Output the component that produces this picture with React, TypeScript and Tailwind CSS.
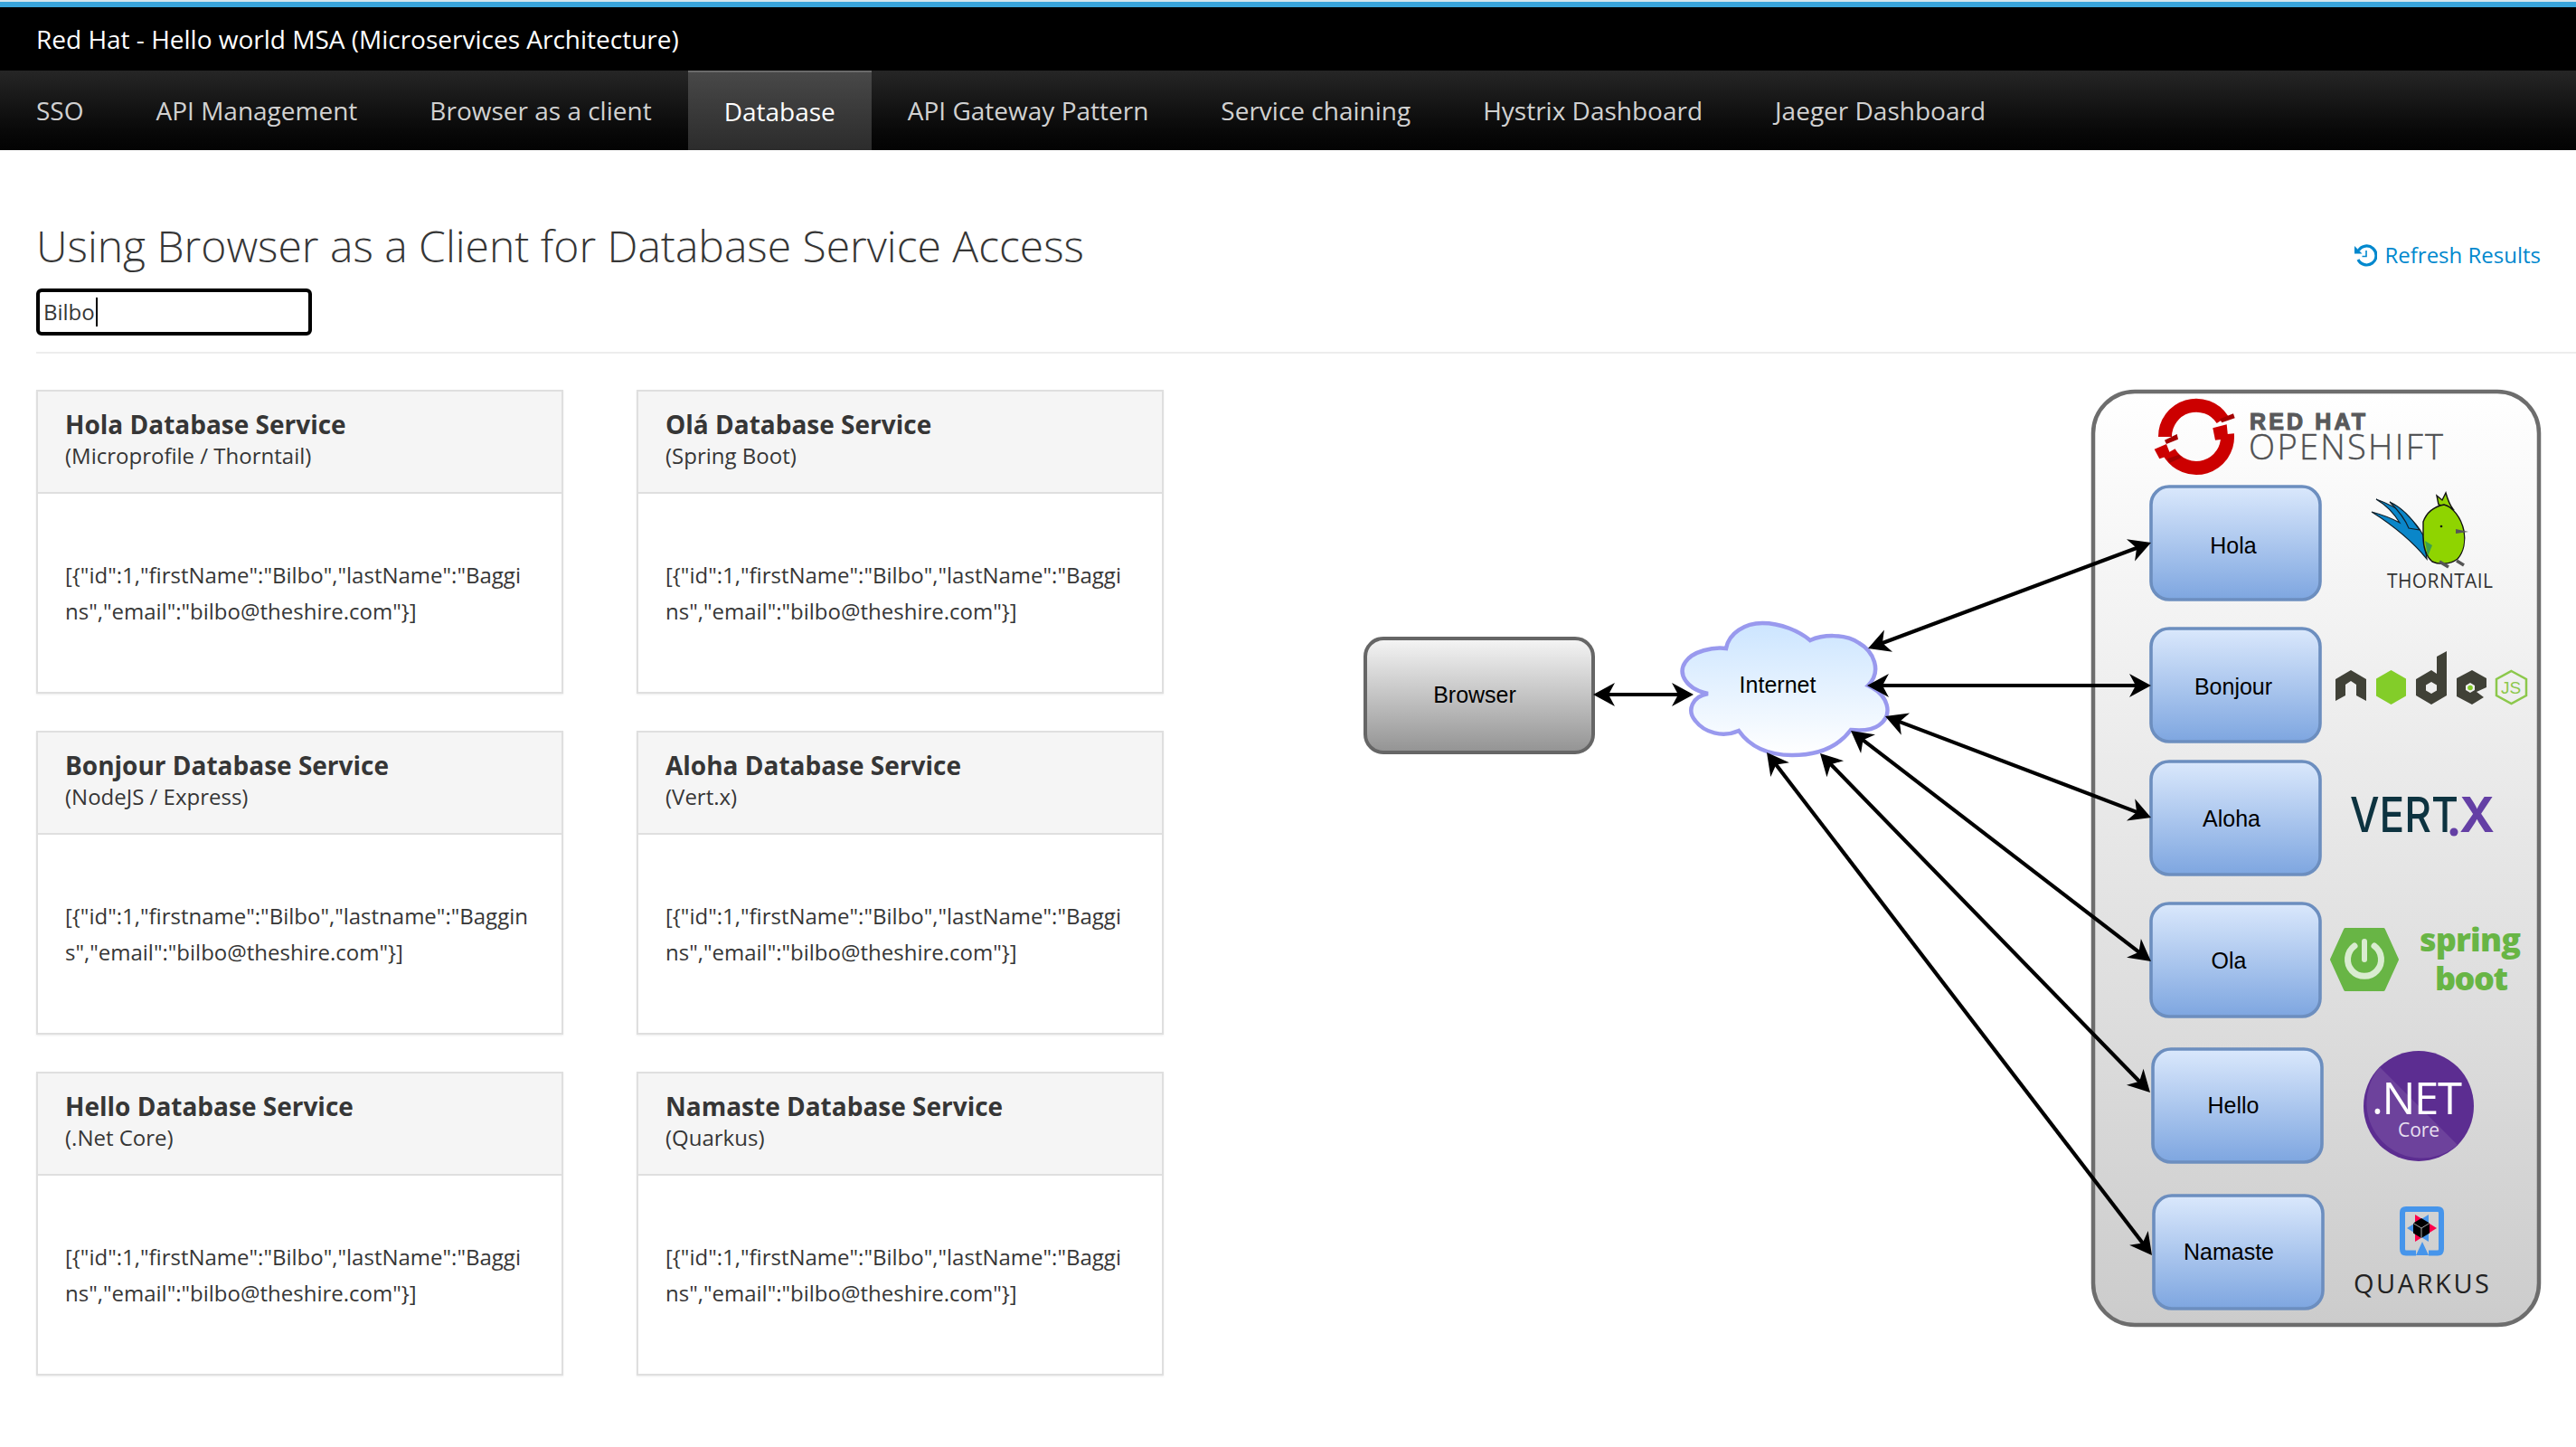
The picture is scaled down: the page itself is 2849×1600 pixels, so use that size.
import React from "react";

const navItems = [
  "SSO",
  "API Management",
  "Browser as a client",
  "Database",
  "API Gateway Pattern",
  "Service chaining",
  "Hystrix Dashboard",
  "Jaeger Dashboard",
];

const stdName = '[{"id":1,"firstName":"Bilbo","lastName":"Baggins","email":"bilbo@theshire.com"}]';
const lowName = '[{"id":1,"firstname":"Bilbo","lastname":"Baggins","email":"bilbo@theshire.com"}]';

const services = [
  { title: "Hola Database Service", sub: "(Microprofile / Thorntail)", body: stdName },
  { title: "Olá Database Service", sub: "(Spring Boot)", body: stdName },
  { title: "Bonjour Database Service", sub: "(NodeJS / Express)", body: lowName },
  { title: "Aloha Database Service", sub: "(Vert.x)", body: stdName },
  { title: "Hello Database Service", sub: "(.Net Core)", body: stdName },
  { title: "Namaste Database Service", sub: "(Quarkus)", body: stdName },
];

const ServiceCard = ({ title, sub, body }: { title: string; sub: string; body: string }) => (
  <div className="flex h-[336px] flex-col border-2 border-[#dfdfdf] bg-white shadow-[0_1px_2px_rgba(0,0,0,0.08)]">
    <div className="h-[113px] border-b-2 border-[#dfdfdf] bg-[#f5f5f5] pt-[17px] pl-[30px]">
      <div className="text-[28px] leading-[38px] font-bold text-[#363636]">{title}</div>
      <div className="text-[24px] leading-[32px] text-[#363636]">{sub}</div>
    </div>
    <div className="flex flex-1 items-center pr-[34px] pl-[30px]">
      <div className="text-[24px] leading-[40px] break-all text-[#363636]">{body}</div>
    </div>
  </div>
);

// arrow line with a notched head at each end, coords are page pixels
const Arrow = ({ x1, y1, x2, y2 }: { x1: number; y1: number; x2: number; y2: number }) => {
  const len = Math.hypot(x2 - x1, y2 - y1);
  const ux = (x2 - x1) / len;
  const uy = (y2 - y1) / len;
  const head = (tx: number, ty: number, dx: number, dy: number) => {
    const bx = tx - dx * 24;
    const by = ty - dy * 24;
    const nx = tx - dx * 17;
    const ny = ty - dy * 17;
    return `${tx},${ty} ${bx - dy * 13},${by + dx * 13} ${nx},${ny} ${bx + dy * 13},${by - dx * 13}`;
  };
  return (
    <g>
      <line x1={x1 + ux * 15} y1={y1 + uy * 15} x2={x2 - ux * 15} y2={y2 - uy * 15} stroke="#000" strokeWidth="4.2" />
      <polygon points={head(x2, y2, ux, uy)} fill="#000" />
      <polygon points={head(x1, y1, -ux, -uy)} fill="#000" />
    </g>
  );
};

const boxes = [
  { label: "Hola", x: 2377, y: 536, tx: 2470, ty: 603 },
  { label: "Bonjour", x: 2377, y: 693, tx: 2470, ty: 759 },
  { label: "Aloha", x: 2377, y: 840, tx: 2468, ty: 905 },
  { label: "Ola", x: 2377, y: 997, tx: 2465, ty: 1062 },
  { label: "Hello", x: 2379, y: 1158, tx: 2470, ty: 1222 },
  { label: "Namaste", x: 2380, y: 1320, tx: 2465, ty: 1384 },
];

const Diagram = () => (
  <svg
    width="1369"
    height="1050"
    viewBox="1480 431 1369 1050"
    className="ml-[193px] shrink-0 overflow-visible font-['Liberation_Sans',sans-serif]"
  >
    <defs>
      <linearGradient id="panel" x1="0" y1="0" x2="0" y2="1">
        <stop offset="0" stopColor="#ffffff" />
        <stop offset="1" stopColor="#cccccc" />
      </linearGradient>
      <linearGradient id="blue" x1="0" y1="0" x2="0" y2="1">
        <stop offset="0" stopColor="#dae8fc" />
        <stop offset="1" stopColor="#7ea6e0" />
      </linearGradient>
      <linearGradient id="grey" x1="0" y1="0" x2="0" y2="1">
        <stop offset="0" stopColor="#f5f5f5" />
        <stop offset="1" stopColor="#939393" />
      </linearGradient>
      <linearGradient id="cloud" x1="0" y1="0" x2="0" y2="1">
        <stop offset="0" stopColor="#cce5ff" />
        <stop offset="1" stopColor="#ffffff" />
      </linearGradient>
    </defs>

    {/* browser + cloud */}
    <rect x="1510" y="706" width="252" height="126" rx="20" fill="url(#grey)" stroke="#666" strokeWidth="4" />
    <text x="1631" y="777" textAnchor="middle" fontSize="25" fill="#000">Browser</text>
    <path
      d="M1889 767 C1865 762 1855 745 1864 732 C1872 720 1895 715 1909 717 C1912 700 1930 689 1949 689 C1970 689 1990 698 2002 708 C2015 702 2040 700 2056 711 C2072 720 2082 742 2066 758 C2088 768 2095 790 2078 802 C2070 808 2058 808 2047 807 C2030 830 2005 835 1982 835 C1955 835 1935 825 1923 808 C1905 816 1885 810 1875 797 C1865 785 1872 770 1889 767 Z"
      fill="url(#cloud)"
      stroke="#9999ee"
      strokeWidth="4.5"
    />
    <text x="1966" y="766" textAnchor="middle" fontSize="25" fill="#000">Internet</text>

    {/* openshift panel */}
    <rect x="2315" y="433" width="493" height="1032" rx="46" fill="url(#panel)" stroke="#6d6d6d" strokeWidth="4.5" />

    {/* openshift logo */}
    <g fill="none" stroke="#cc0000" strokeWidth="15">
      <path d="M2394.5 483 A34.5 34.5 0 0 1 2458 464" />
      <path d="M2463.4 480 A34.5 34.5 0 0 1 2399 500" />
    </g>
    <polygon points="2447.3,473.3 2462.7,469.3 2464.3,485 2450,486.7" fill="#cc0000" />
    <polygon points="2382.7,496.7 2396,491 2400.7,503.3 2388.3,507.3" fill="#cc0000" />
    <polygon points="2455,463.3 2470,457.3 2471.7,462.3 2457.3,467.3" fill="#a30000" />
    <polygon points="2394,486.7 2407.7,480 2409,485.7 2396,491" fill="#a30000" />
    <polygon points="2396.7,507.3 2410,502.7 2412.7,506 2400,511.7" fill="#a30000" />
    <text x="2488" y="475" fontSize="25" fontWeight="700" fill="#58595b" textLength="128" lengthAdjust="spacing" stroke="#58595b" strokeWidth="1.1">RED HAT</text>
    <text x="2487" y="508" fontSize="38" fill="#4f5052" textLength="215" lengthAdjust="spacing" stroke="#4f5052" strokeWidth="0.4" className="font-['Open_Sans'] font-light">OPENSHIFT</text>

    {boxes.map((b) => (
      <g key={b.label}>
        <rect x={b.x + 2} y={b.y + 2} width="187" height="125" rx="20" fill="url(#blue)" stroke="#6c8ebf" strokeWidth="3.6" />
        <text x={b.tx} y={b.ty + 9} textAnchor="middle" fontSize="25" fill="#000">{b.label}</text>
      </g>
    ))}

    <Arrow x1={1762} y1={768} x2={1873} y2={768} />
    <Arrow x1={2066} y1={717} x2={2379} y2={600} />
    <Arrow x1={2065} y1={758} x2={2379} y2={758} />
    <Arrow x1={2085} y1={792} x2={2379} y2={904} />
    <Arrow x1={2047} y1={808} x2={2379} y2={1063} />
    <Arrow x1={2013} y1={833} x2={2378} y2={1208} />
    <Arrow x1={1954} y1={832} x2={2380} y2={1388} />

    {/* thorntail */}
    <path d="M2680 592 C2670 572 2650 560 2628 552 C2638 558 2648 568 2654 578 C2645 573 2634 569 2623 566 C2642 578 2666 596 2684 618 Z" fill="#0a86c9" stroke="#10202a" strokeWidth="1.2" />
    <path d="M2643 555 C2658 562 2668 574 2676 586 L2664 584 C2660 574 2652 564 2643 555 Z" fill="#0a86c9" stroke="#10202a" strokeWidth="1.2" />
    <path d="M2697 558 L2695 548 L2701 553 L2705 545 C2707 552 2709 558 2713 563 Z" fill="#8fd400" stroke="#111" strokeWidth="1.4" />
    <path d="M2680 577 C2684 566 2693 560 2703 558 C2712 560 2722 572 2725 587 C2727 598 2725 610 2718 618 C2710 624 2698 625 2690 621 C2683 615 2680 605 2680 593 Z" fill="#8fd400" stroke="#111" strokeWidth="1.4" />
    <polygon points="2682,598 2690,603 2685,615" fill="#3e9f4c" />
    <polygon points="2716,585 2730,588 2716,590" fill="#555" />
    <circle cx="2700" cy="582" r="1.3" fill="#111" />
    <path d="M2698 621 L2708 627 M2717 620 L2725 625" stroke="#555" strokeWidth="3.5" />
    <text x="2640" y="650" fontSize="21" fill="#333" textLength="117" className="font-['Open_Sans']">THORNTAIL</text>

    {/* node */}
    <polygon points="2583,775 2583,751 2600,741 2617,751 2617,775 2606,769 2606,757 2600,753 2594,757 2594,769" fill="#404137" />
    <polygon points="2644.5,741 2661,750.5 2661,769.5 2644.5,779 2628,769.5 2628,750.5" fill="#83cd29" />
    <path d="M2695 726 L2706 720 V769 L2689 779 L2672 769 V751 L2689 741 L2695 745 Z M2689 754 L2683 757.5 V763.5 L2689 767 L2695 763.5 V757.5 Z" fill="#404137" fillRule="evenodd" />
    <path d="M2734 741 L2750 750 V760 L2739 765 L2747 771 L2734 779 L2717 770 V750 Z M2732 755 L2727 758 V763 L2732 766 L2737 763 V758 Z" fill="#404137" fillRule="evenodd" />
    <circle cx="2732" cy="760.5" r="2.8" fill="#83cd29" />
    <polygon points="2777.5,742 2794,751 2794,769 2777.5,778 2761,769 2761,751" fill="none" stroke="#8cc84b" strokeWidth="2.5" />
    <text x="2777" y="767" textAnchor="middle" fontSize="19" fill="#8cc84b">JS</text>

    {/* vert.x */}
    <text x="2599" y="920" fontSize="54" fontWeight="500" fill="#0d3340" textLength="120" lengthAdjust="spacingAndGlyphs" className="font-['Inter']">VERT</text>
    <circle cx="2714" cy="920" r="4.5" fill="#643fa5" />
    <text x="2720" y="920" fontSize="54" fontWeight="700" fill="#643fa5" textLength="39" lengthAdjust="spacingAndGlyphs" className="font-['Inter']">X</text>

    {/* spring boot */}
    <polygon points="2579,1061 2594,1028 2636,1028 2651,1061 2636,1094 2594,1094" fill="#68b545" stroke="#68b545" strokeWidth="4" strokeLinejoin="round" />
    <path d="M2604 1046 A18.5 18.5 0 1 0 2626 1046" fill="none" stroke="#d9ecd0" strokeWidth="7" strokeLinecap="round" />
    <line x1="2615" y1="1041" x2="2615" y2="1061" stroke="#d9ecd0" strokeWidth="6" strokeLinecap="round" />
    <text x="2676" y="1052" fontSize="36" fontWeight="800" fill="#68b545" textLength="112" className="font-['Open_Sans']">spring</text>
    <text x="2693" y="1095" fontSize="36" fontWeight="800" fill="#68b545" textLength="81" className="font-['Open_Sans']">boot</text>

    {/* .net */}
    <circle cx="2675" cy="1223" r="61" fill="#5c2d91" />
    <path d="M2632 1180 A61 61 0 0 0 2718 1266 Z" fill="#6d429c" />
    <text x="2623" y="1232" fontSize="49" fill="#fff" textLength="100" className="font-['Open_Sans']">.NET</text>
    <text x="2652" y="1257" fontSize="21" fill="#e9e0f1" textLength="46" className="font-['Open_Sans']">Core</text>

    {/* quarkus */}
    <path d="M2672 1385.5 H2661 Q2657 1385.5 2657 1381 V1341 Q2657 1337 2661 1337 H2696 Q2700 1337 2700 1341 V1381 Q2700 1385.5 2696 1385.5 H2686" fill="none" stroke="#4695eb" strokeWidth="6" />
    <polygon points="2679,1373 2672,1388 2686,1388" fill="#4695eb" />
    <polygon points="2671,1343 2695,1358 2671,1373" fill="#ff004a" />
    <polygon points="2686,1343 2662,1358 2686,1373" fill="#4695eb" />
    <polygon points="2678,1347 2687,1352.5 2687,1363.5 2678,1369 2669,1363.5 2669,1352.5" fill="#000" />
    <path d="M2678 1358 V1369 M2678 1358 L2669 1352.5 M2678 1358 L2687 1352.5" stroke="#bbb" strokeWidth="0.9" />
    <text x="2603" y="1430" fontSize="29" fill="#222" textLength="150" className="font-['Open_Sans']">QUARKUS</text>
  </svg>
);

const RefreshIcon = () => (
  <svg width="26" height="25" viewBox="0 0 26 25" className="mr-[8px] shrink-0">
    <path d="M5.5 7 A10.5 10.5 0 1 1 5 17" fill="none" stroke="#0088ce" strokeWidth="3.2" />
    <polygon points="1,2 1,10.5 9.5,10.5" fill="#0088ce" />
    <path d="M14 7 V13.5 H9.5" fill="none" stroke="#0088ce" strokeWidth="1.6" />
  </svg>
);

export default function App() {
  return (
    <div className="min-h-[1600px] bg-white font-['Open_Sans',sans-serif]">
      <div className="h-[2px] bg-[#d5e5ee]" />
      <div className="h-[6px] bg-[#39a5dc]" />
      <div className="flex h-[70px] items-center bg-black pl-[40px] text-[28px] text-white">
        Red Hat - Hello world MSA (Microservices Architecture)
      </div>
      <nav className="flex h-[88px] bg-gradient-to-b from-[#262626] to-[#030303]">
        {navItems.map((item) => (
          <a
            key={item}
            className={
              item === "Database"
                ? "flex items-center border-t-2 border-[#6a6a6a] bg-gradient-to-b from-[#484848] to-[#2c2c2c] px-[40px] text-[28px] text-white"
                : "flex items-center px-[40px] text-[28px] text-[#d1d1d1]"
            }
          >
            {item}
          </a>
        ))}
      </nav>

      <div className="ml-[40px] border-b-2 border-[#ededed] pt-[74px] pb-[18px]">
        <div className="flex items-start justify-between pr-[39px]">
          <h1 className="text-[48px] leading-[64px] font-light text-[#363636]">
            Using Browser as a Client for Database Service Access
          </h1>
          <a className="mt-[26px] flex items-center text-[24px] leading-[32px] text-[#0088ce]">
            <RefreshIcon />
            Refresh Results
          </a>
        </div>
        <div className="mt-[15px] flex h-[52px] w-[305px] items-center rounded-[6px] border-[4px] border-black pl-[4px] text-[24px] text-[#363636]">
          Bilbo
          <span className="ml-[1px] h-[32px] w-[2px] bg-black" />
        </div>
      </div>

      <div className="mt-[40px] flex items-start pl-[40px]">
        <div className="grid w-[1247px] shrink-0 grid-cols-[583px_583px] gap-x-[81px] gap-y-[41px]">
          {services.map((s) => (
            <ServiceCard key={s.title} title={s.title} sub={s.sub} body={s.body} />
          ))}
        </div>
        <Diagram />
      </div>
    </div>
  );
}
